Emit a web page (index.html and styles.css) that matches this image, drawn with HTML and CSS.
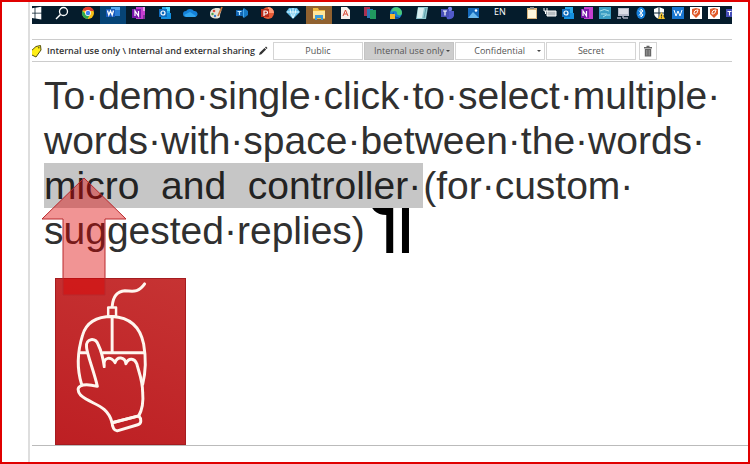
FILE: index.html
```
<!DOCTYPE html>
<html lang="en">
<head>
  <meta charset="UTF-8">
  <title>Custom suggested replies</title>
  <link rel="stylesheet" href="styles.css">
</head>
<body>
<div class="slide">
  <div class="gutter"></div>
  <div class="screen">

    <div class="taskbar">
      <svg class="start" viewBox="0 0 17 18"><path fill="#fff" d="M0 2.200l2.600-.4v5H0zM3.400 1.700L9.300.8v6H3.400zM0 7.600h2.600v4.800L0 12zM3.400 7.600h5.900v5.800l-5.900-.8z"/></svg>
      <div class="apps">
        <span><svg viewBox="0 0 18 18"><circle cx="10.500" cy="5.500" r="4" fill="none" stroke="#fff" stroke-width="1.300"/><path d="M7.500 8.500L3 13" stroke="#fff" stroke-width="1.500"/></svg></span>
        <span><svg viewBox="0 0 18 18"><circle cx="9" cy="7" r="6" fill="#fbc116"/><path d="M3.500 4.500A6 6 0 0 1 14.800 5H9z" fill="#e33b2e"/><path d="M3.400 4.700A6 6 0 0 0 8.500 13l2.500-4.500H7z" fill="#2da94f"/><circle cx="9" cy="7" r="2.900" fill="#fff"/><circle cx="9" cy="7" r="2.200" fill="#3f82f0"/></svg></span>
        <span class="active"><svg viewBox="0 0 18 18"><path fill="#2b7cd3" d="M7 1h9v9H7z"/><path fill="#56a8ef" d="M7 1h9v3H7z"/><path fill="#185abd" d="M2 3h9v8H2z"/><path d="M3.500 4.500l1.300 4.500L6.500 5l1.700 4 1.300-4.500" fill="none" stroke="#fff" stroke-width="1.300"/></svg></span>
        <span><svg viewBox="0 0 18 18"><path fill="#c53fd0" d="M6 1h9v12H6z"/><path fill="#e6a0e8" d="M13 1h2v4h-2z"/><path fill="#80329a" d="M13 9h2v4h-2z"/><path fill="#7719aa" d="M2 3h9v9H2z"/><path d="M5 10V5l3.500 5V5" fill="none" stroke="#fff" stroke-width="1.200"/></svg></span>
        <span><svg viewBox="0 0 18 18"><path fill="#28a8ea" d="M6 1h8v6H6z"/><path fill="#50d9ff" d="M10 1h4v4h-4z"/><path fill="#1490df" d="M5 7h10v6H5z"/><path fill="#0f6cbd" d="M3 3h8v8H3z"/><circle cx="7" cy="7" r="2" fill="none" stroke="#fff" stroke-width="1.200"/></svg></span>
        <span><svg viewBox="0 0 18 18"><path fill="#1480d8" d="M5 11a3 3 0 0 1 0-6 5 5 0 0 1 8 0 3 3 0 0 1 1 6z"/><path fill="#31a5ee" d="M3 9l6-3 6 4-1 1H5z"/></svg></span>
        <span><svg viewBox="0 0 18 18"><path fill="#e4e1d6" d="M3 8c0-4 3-6 7-6s5 2 4 4-1 3-1 5-10 3-10-3z"/><circle cx="7" cy="5" r="1.300" fill="#de4a37"/><circle cx="5.500" cy="8" r="1.200" fill="#4aa24b"/><circle cx="8" cy="10" r="1.200" fill="#3478ca"/><path d="M15 1l-4 9" stroke="#c6733a" stroke-width="1.700"/></svg></span>
        <span><svg viewBox="0 0 18 18"><path fill="#1679c5" d="M11 2l4 3v4l-4 3-3-5z"/><path fill="#45abed" d="M11 2v10L8 8z"/><path fill="#1265b2" d="M3 4h7v6H3z"/><path d="M4.500 5.500h4M6.500 5.500V9" stroke="#bce7ff" stroke-width="1.200"/></svg></span>
        <span><svg viewBox="0 0 18 18"><circle cx="10" cy="7" r="6" fill="#e65b36"/><path fill="#ff9875" d="M10 1a6 6 0 0 1 6 6h-6z"/><path fill="#b92b19" d="M3 3h8v8H3z"/><path d="M6 10V5h2a1.300 1.300 0 0 1 0 3H6" fill="none" stroke="#fff" stroke-width="1.200"/></svg></span>
        <span><svg viewBox="0 0 18 18"><path fill="#60bde9" d="M5 2h8l3 4-7 7-7-7z"/><path d="M3 6h12M6 3l1 5 2 4 2-4 1-5M9 2v10" fill="none" stroke="#e4f9ff"/></svg></span>
        <span class="folder"><svg viewBox="0 0 18 18"><path fill="#f0b93d" d="M3 2h5l1 2h6v9H3z"/><path fill="#ffe69a" d="M3 5h12v7H3z"/><path fill="#3d9dd9" d="M5 9h8v5h-2v-2H7v2H5z"/></svg></span>
        <span><svg viewBox="0 0 18 18"><path fill="#f5f2ee" d="M5 1h6l3 3v9H5z"/><path d="M7 10l2.500-6L12 10M8 8h3" fill="none" stroke="#d84c3a"/></svg></span>
        <span><svg viewBox="0 0 18 18"><path fill="#aa3151" d="M3 1h6v9H3z"/><path fill="#2c75b4" d="M6 3h6v9H6z"/><path fill="#20985f" d="M9 4h6v9H9z"/></svg></span>
        <span><svg viewBox="0 0 18 18"><circle cx="9" cy="7" r="6" fill="#1680cf"/><path fill="#49c878" d="M6 2c5-2 9 1 9 5 0 3-4 3-5 1 1-3-3-4-6-2z"/><path fill="#0a4aa0" d="M7 6c-1 3 2 6 6 5-3 3-8 2-9-2z"/><path fill="#f2b62e" d="M3 8h5v5H3z"/></svg></span>
        <span><svg viewBox="0 0 18 18"><path fill="#91c9d0" d="M5 1h10l-2 12H3z"/><path fill="#d9eef0" d="M5 2h6L9 12H4z"/><path d="M13 2l-2 10" stroke="#5d9ca7"/></svg></span>
        <span><svg viewBox="0 0 18 18"><circle cx="12" cy="3" r="2.200" fill="#7b83eb"/><path fill="#5059c9" d="M7 5h9v5q-2 4-7 3z"/><path fill="#464eb8" d="M3 3h8v8H3z"/><path d="M5 5h4M7 5v4.500" stroke="#fff" stroke-width="1.200"/></svg></span>
        <span><svg viewBox="0 0 18 18"><path fill="#1569bb" d="M4 2h11v10H4z"/><path fill="#69b8ed" d="M4 12l5-6 6 6z"/><circle cx="12" cy="4.500" r="1.300" fill="#fff"/></svg></span>
      </div>
      <span class="lang">EN</span>
      <div class="tray">
        <span><svg viewBox="0 0 18 18"><path fill="#d9b47c" d="M4 2h10v11H4z"/><path fill="#fff8df" d="M5 4h8v8H5z"/><path fill="#888" d="M7 1h4v2H7z"/></svg></span>
        <span><svg viewBox="0 0 18 18"><path d="M6 5h9v5H6z" fill="#b8bec3" stroke="#fff"/><path d="M3 2v3h3V2M4.500 5v3" fill="none" stroke="#fff"/></svg></span>
        <span><svg viewBox="0 0 18 18"><path fill="#28a8ea" d="M6 1h8v6H6z"/><path fill="#1490df" d="M5 7h10v6H5z"/><path fill="#0f6cbd" d="M3 3h8v8H3z"/><circle cx="7" cy="7" r="2" fill="none" stroke="#fff" stroke-width="1.200"/></svg></span>
        <span><svg viewBox="0 0 18 18"><path fill="#c53fd0" d="M6 1h9v12H6z"/><path fill="#7719aa" d="M3 3h8v9H3z"/><path d="M5 10V5l3.500 5V5" fill="none" stroke="#fff" stroke-width="1.200"/></svg></span>
        <span><svg viewBox="0 0 18 18"><path fill="#3c9ec4" d="M3 1h12v12H3z"/><path d="M4 5q4-3 9 0M5 8h6M7 11q3-3 7-2" fill="none" stroke="#a6e0e9"/></svg></span>
        <span><svg viewBox="0 0 18 18"><path fill="#b5b9c9" d="M4 2h11v8H4z"/><path fill="#dadce5" d="M5 3h9v5H5z"/><path d="M3 12h4M9 12h5M9 9v3" stroke="#a9adbf" stroke-width="1.500"/></svg></span>
        <span><svg viewBox="0 0 18 18"><ellipse cx="9" cy="7" rx="4.500" ry="6" fill="#1680dc"/><path d="M7 4.500l4 4.500-2 2V3l2 2-4 4.500" fill="none" stroke="#fff"/></svg></span>
        <span><svg viewBox="0 0 18 18"><path fill="#fff" d="M9 1l5 2v4q0 4-5 6-5-2-5-6V3z"/><path d="M9 1v12M4 7h10" stroke="#0a2435"/><path fill="#f7c52b" d="M11.500 6l3.500 7H8z"/><path d="M11.500 8.500v2M11.500 11.300v1" stroke="#332"/></svg></span>
        <span><svg viewBox="0 0 18 18"><path fill="#1876d1" d="M3 1h12v12H3z"/><path d="M5 4l2 6 2-5 2 5 2-6" fill="none" stroke="#fff"/></svg></span>
        <span><svg viewBox="0 0 18 18"><path fill="#fff" d="M3 1h12v12H3z"/><path fill="#e15a2b" d="M5 3l4-1 4 1v5l-4 4-4-4z"/><path d="M7 8c0-3 1-4 4-4-1 3-1 4-4 4z" fill="none" stroke="#fff"/></svg></span>
        <span><svg viewBox="0 0 18 18"><path fill="#fff" d="M3 1h12v12H3z"/><path fill="#e15a2b" d="M5 3l4-1 4 1v5l-4 4-4-4z"/><path d="M7 8c0-3 1-4 4-4-1 3-1 4-4 4z" fill="none" stroke="#fff"/></svg></span>
      </div>
      <svg class="cut" viewBox="0 0 9 18"><path fill="#464eb8" d="M3 3h6v8H3z"/><path d="M4.500 5.500h4M6.500 5.500v4" stroke="#fff"/></svg>
    </div>

    <div class="labelbar">
      <svg class="tag" viewBox="0 0 10 14"><path fill="#ffee16" stroke="#55500d" d="M-2 8L4 2.500l4.500-1L9 6l-5 7-6-3z"/><circle cx="6.800" cy="3.800" r=".8" fill="#55500d"/></svg>
      <span class="current">Internal use only \ Internal and external sharing</span>
      <svg class="pencil" viewBox="0 0 10 10"><path fill="#333" d="M1 9l.8-2.600L6.500 2l1.600 1.600-4.700 4.600zM7 1.500L8 .6l1.500 1.500-.9.9z"/></svg>
      <button class="label">Public</button>
      <button class="label selected menu">Internal use only<i></i></button>
      <button class="label menu wide">Confidential<i></i></button>
      <button class="label">Secret</button>
      <button class="trash" aria-label="Remove label"><svg viewBox="0 0 10 12"><path fill="#666" d="M1 2h2.500V.8h3V2H9v1.400H1zM1.800 4h6.400v7.500H1.800z"/><path d="M3.800 5v5.500M6.200 5v5.500" stroke="#aaa" stroke-width=".8"/></svg></button>
    </div>

    <div class="document">
      <p>To·demo·single·click·to·select·multiple·<br>
      words·with·space·between·the·words·<br>
      <mark>micro&nbsp; and&nbsp; controller·</mark>(for·custom·<br>
      suggested·replies)<span class="pilcrow">¶</span></p>

      <div class="card">
        <svg viewBox="0 0 131 166" fill="none" stroke="#fff6ef" stroke-width="3" stroke-linecap="round" stroke-linejoin="round">
          <path d="M57 28C58 17 62 13 70 12C77 12 83 15 90 5"/>
          <path stroke-width="2.500" d="M53 29h8v9h-8z"/>
          <path d="M26 107C21 91 22 73 27 57C31 43 42 38 57 38C78 39 86 51 89 66C92 83 91 95 88 107"/>
          <path d="M57 39v35M25 75h6M48 75h42"/>
          <path d="M42 109C39 95 31 75 31 69C30 60 40 59 43 67C47 75 48 82 49 89C47 78 57 79 60 85C62 78 70 79 71 86C74 79 80 81 82 86C84 94 88 103 88 115C89 126 87 134 84 139L57 146C52 127 36 128 25 118C18 109 26 105 42 109z"/>
          <path d="M57 146l27-7c3 3 3 8-1 9l-20 6c-4 1-6-4-6-8z"/>
        </svg>
      </div>

      <svg class="arrow" viewBox="0 0 86 119"><path d="M43 1L85 42H64V118H22V42H1z"/></svg>
    </div>

  </div>
</div>
</body>
</html>
```
FILE: styles.css
```
* {
  box-sizing: border-box;
}
body {
  margin: 0;
  background: #fff;
  font-family: "Open Sans", sans-serif;
}
.slide {
  display: flex;
  min-height: 100vh;
  border: 2px solid #e00000;
}
.gutter {
  width: 28px;
  border-right: 2px solid #dedede;
}
.screen {
  flex: 1;
  padding: 4px 0 16px 2px;
  display: flex;
  flex-direction: column;
}
.taskbar {
  display: flex;
  height: 18px;
  margin-right: 16px;
  background: #051c2c;
  overflow: hidden;
}
.taskbar svg {
  display: block;
  height: 18px;
}
.start {
  width: 17px;
}
.cut {
  width: 9px;
}
.apps {
  display: flex;
  flex: 437;
}
.tray {
  display: flex;
  flex: 200;
}
.apps span,
.tray span {
  flex: 1;
  display: flex;
  justify-content: center;
}
.apps svg,
.tray svg {
  width: 18px;
}
.apps .active {
  background: #064476;
}
.apps .folder {
  background: #90612f;
}
.lang {
  width: 37px;
  padding-left: 8px;
  color: #fff;
  font-size: 9px;
  line-height: 11px;
}

/* sensitivity label bar */
.labelbar {
  display: flex;
  align-items: center;
  height: 23px;
  margin: 15px 16px 0 0;
  border-top: 1px solid #ccc;
  border-bottom: 1px solid #ccc;
  color: #333;
  font-size: 9px;
}
.tag {
  width: 10px;
  height: 14px;
}
.current {
  width: 205px;
  margin-left: 5px;
  font-weight: 600;
  white-space: nowrap;
}
.pencil {
  width: 10px;
  height: 10px;
  margin: 0 5px 0 6px;
}
.labelbar button {
  height: 18px;
  padding: 0;
  border: 1px solid #d4d4d4;
  background: #fff;
  color: #555;
  font: 9px "Open Sans", sans-serif;
}
.labelbar .label {
  width: 90px;
  margin-right: 1px;
}
.labelbar .menu {
  display: flex;
  align-items: center;
  justify-content: flex-end;
  gap: 2px;
  padding-right: 3px;
}
.labelbar .selected {
  background: #cdcdcd;
  border-color: #c4c4c4;
}
.labelbar .wide {
  gap: 12px;
}
.menu i {
  border: 2px solid transparent;
  border-top-color: #444;
  border-bottom: 0;
}
.labelbar .trash {
  width: 18px;
  margin-left: 2px;
}
.trash svg {
  display: block;
  width: 10px;
  height: 12px;
  margin: 0 auto;
}

.document {
  position: relative;
  flex: 1;
  padding: 11px 0 0 12px;
  border-bottom: 1px solid #bbb;
}
.document p {
  margin: 0;
  color: #303030;
  font: 39px/45px "Liberation Sans", Arial, sans-serif;
  white-space: nowrap;
}
mark {
  display: inline-block;
  height: 45px;
  padding-right: 2px;
  background: #c6c6c6;
  color: #222;
}
/* the mark is taller than the line, only its lower part shows */
.pilcrow {
  display: inline-block;
  height: 45px;
  margin-left: 2px;
  overflow: hidden;
  vertical-align: top;
  color: #000;
  font-size: 92px;
  font-weight: bold;
  line-height: 12px;
}
.card {
  width: 131px;
  height: 167px;
  margin: 25px 0 0 11px;
  border: 1px solid #a51c20;
  background: linear-gradient(200deg, #c63333, #bd1f23);
}
.card svg {
  display: block;
  width: 100%;
}
.arrow {
  position: absolute;
  top: 115px;
  left: 9px;
  width: 86px;
  height: 119px;
  fill: rgba(222, 0, 0, 0.42);
  stroke: #b8282c;
}
```
